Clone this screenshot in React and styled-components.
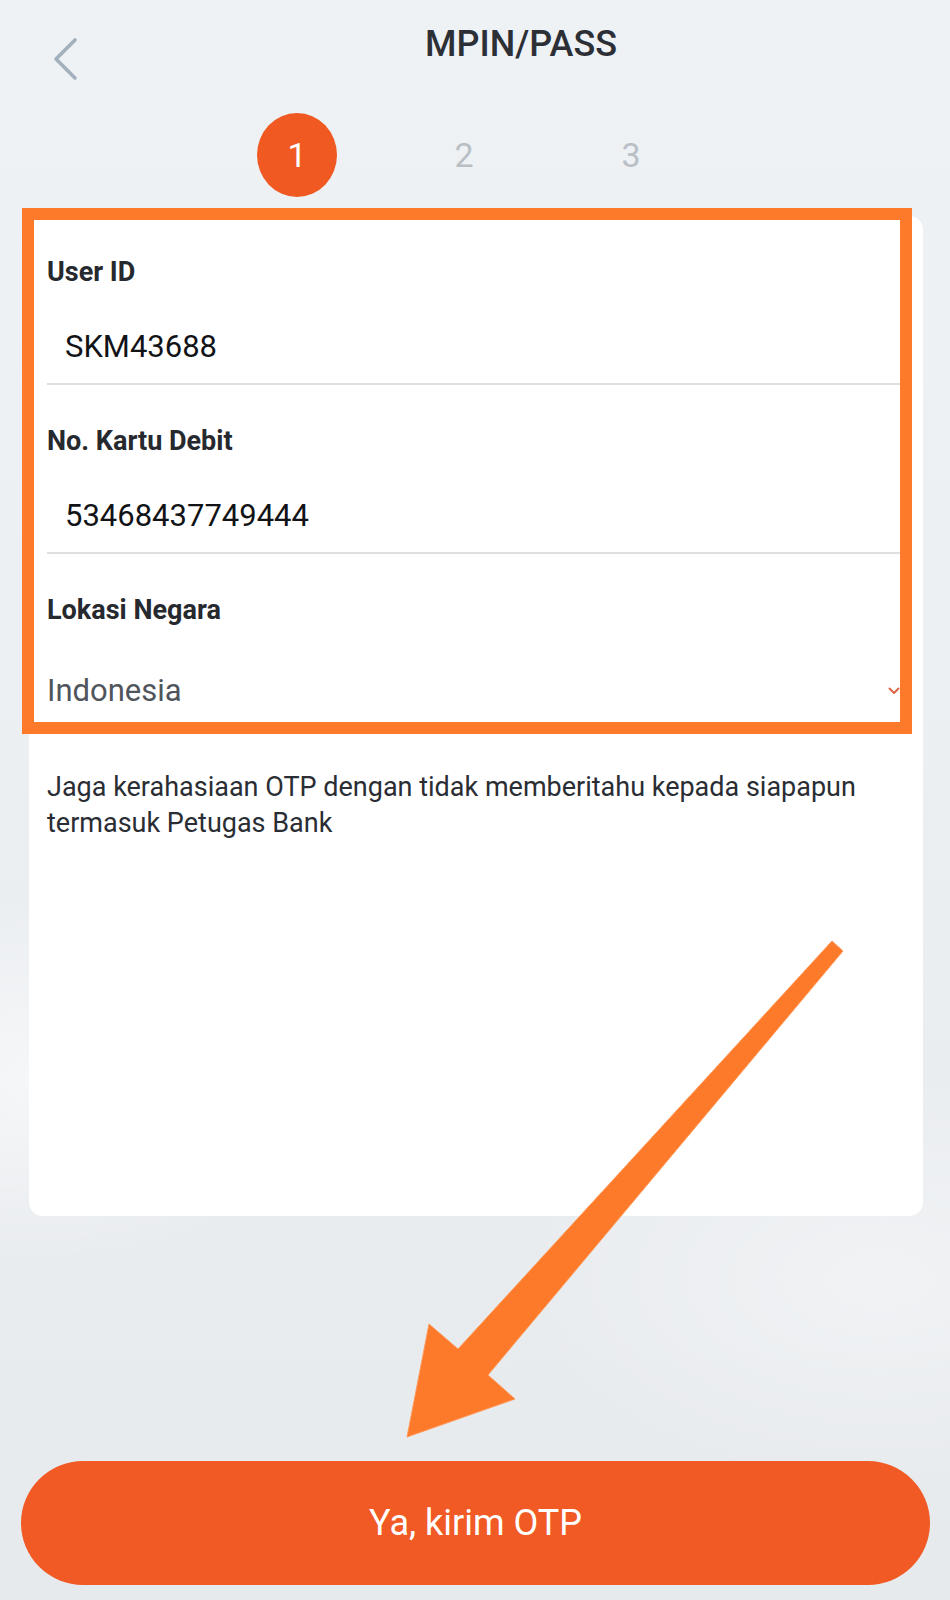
import React from "react";
import styled, { createGlobalStyle } from "styled-components";

const GlobalStyle = createGlobalStyle`
  html, body {
    margin: 0;
    padding: 0;
  }
  body {
    font-family: Roboto, "Noto Sans", "Liberation Sans", sans-serif;
    background: #eceff2;
  }
  * { box-sizing: border-box; }
`;

const Page = styled.div`
  position: relative;
  width: 950px;
  height: 1600px;
  overflow: hidden;
  background:
    radial-gradient(ellipse 420px 260px at 40px 1080px, rgba(255,255,255,0.55), rgba(255,255,255,0) 70%),
    radial-gradient(ellipse 520px 300px at 880px 1280px, rgba(255,255,255,0.35), rgba(255,255,255,0) 70%),
    linear-gradient(180deg, #eef2f5 0%, #edf0f3 40%, #e7eaed 100%);
`;

const Header = styled.header`
  display: flex;
  align-items: flex-start;
  height: 113px;
  padding-left: 52px;
`;

const BackButton = styled.button`
  margin-top: 37px;
  width: 26px;
  height: 44px;
  padding: 0;
  border: none;
  background: transparent;
  display: flex;
  cursor: pointer;
`;

const Title = styled.h1`
  flex: 1;
  margin: 24px 0 0;
  padding-left: 14px;
  text-align: center;
  font-size: 36px;
  line-height: 40px;
  font-weight: 500;
  color: #2c2f35;
`;

const Steps = styled.div`
  display: flex;
  gap: 87px;
  padding-left: 257px;
  height: 84px;
`;

const Step = styled.div`
  width: 80px;
  height: 84px;
  border-radius: 50%;
  display: flex;
  align-items: center;
  justify-content: center;
  font-size: 34px;
  font-weight: 400;
  background: ${(p) => (p.$active ? "#f05a22" : "transparent")};
  color: ${(p) => (p.$active ? "#ffffff" : "#b9bfc5")};
`;

const Card = styled.main`
  margin: 19px 27px 0 29px;
  height: 1000px;
  padding: 41px 23px 0 18px;
  background: #ffffff;
  border-radius: 14px;
  display: flex;
  flex-direction: column;
`;

const Field = styled.div`
  display: flex;
  flex-direction: column;
  & + & {
    margin-top: 41px;
  }
`;

const Label = styled.div`
  font-size: 27px;
  line-height: 30px;
  font-weight: 700;
  color: #26292e;
`;

const Value = styled.div`
  margin-top: 42px;
  padding-left: 18px;
  font-size: 31px;
  line-height: 36px;
  color: #121316;
`;

const Divider = styled.div`
  margin-top: 18px;
  height: 2px;
  background: #dedfe1;
`;

const Select = styled.div`
  margin-top: 48px;
  display: flex;
  align-items: center;
  justify-content: space-between;
  height: 36px;
`;

const SelectValue = styled.span`
  font-size: 31px;
  line-height: 36px;
  color: #50555c;
`;

const Caret = styled.svg`
  width: 12px;
  height: 8px;
  flex: none;
`;

const Notice = styled.p`
  margin: 60px 0 0;
  font-size: 27px;
  line-height: 36px;
  color: #2a2d33;
`;

const PrimaryButton = styled.button`
  display: flex;
  align-items: center;
  justify-content: center;
  margin: 245px 20px 0 21px;
  width: calc(100% - 41px);
  height: 124px;
  border: none;
  border-radius: 62px;
  background: #f15a24;
  color: #ffffff;
  font-family: Roboto, "Noto Sans", sans-serif;
  font-size: 36px;
  font-weight: 400;
  cursor: pointer;
`;

const Highlight = styled.div`
  position: absolute;
  left: 22px;
  top: 208px;
  width: 890px;
  height: 526px;
  border: 12px solid #fe7a2b;
  pointer-events: none;
`;

const Overlay = styled.svg`
  position: absolute;
  left: 0;
  top: 0;
  width: 950px;
  height: 1600px;
  pointer-events: none;
`;

function ChevronLeft() {
  return (
    <svg width="26" height="44" viewBox="0 0 26 44" fill="none">
      <path
        d="M23 3 L4 22 L23 41"
        stroke="#a3b0bd"
        strokeWidth="3.6"
        strokeLinecap="round"
        strokeLinejoin="round"
      />
    </svg>
  );
}

function FormField({ label, value }) {
  return (
    <Field>
      <Label>{label}</Label>
      <Value>{value}</Value>
      <Divider />
    </Field>
  );
}

export default function App() {
  return (
    <>
      <GlobalStyle />
      <Page>
        <Header>
          <BackButton aria-label="Kembali">
            <ChevronLeft />
          </BackButton>
          <Title>MPIN/PASS</Title>
        </Header>

        <Steps>
          <Step $active>1</Step>
          <Step>2</Step>
          <Step>3</Step>
        </Steps>

        <Card>
          <FormField label="User ID" value="SKM43688" />
          <FormField label="No. Kartu Debit" value="53468437749444" />
          <Field>
            <Label>Lokasi Negara</Label>
            <Select>
              <SelectValue>Indonesia</SelectValue>
              <Caret viewBox="0 0 12 8" fill="none">
                <path
                  d="M1.5 1.5 L6 6 L10.5 1.5"
                  stroke="#dc6a45"
                  strokeWidth="2"
                  strokeLinecap="round"
                  strokeLinejoin="round"
                />
              </Caret>
            </Select>
          </Field>
          <Notice>
            Jaga kerahasiaan OTP dengan tidak memberitahu kepada siapapun
            termasuk Petugas Bank
          </Notice>
        </Card>

        <PrimaryButton>Ya, kirim OTP</PrimaryButton>

        <Highlight />
        <Overlay viewBox="0 0 950 1600">
          <polygon
            points="832,941 843,951 488,1375 515,1399 407,1437 429,1324 458,1349"
            fill="#fd7a2b"
            stroke="#ff9a5a"
            strokeWidth="1"
            strokeLinejoin="miter"
          />
        </Overlay>
      </Page>
    </>
  );
}
